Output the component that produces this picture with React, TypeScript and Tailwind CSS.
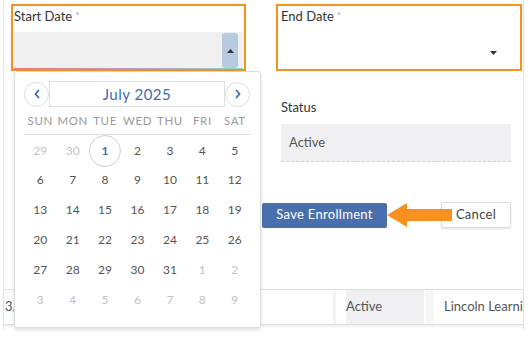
import React from 'react';

const weeks = [
  [29, 30, 1, 2, 3, 4, 5],
  [6, 7, 8, 9, 10, 11, 12],
  [13, 14, 15, 16, 17, 18, 19],
  [20, 21, 22, 23, 24, 25, 26],
  [27, 28, 29, 30, 31, 1, 2],
  [3, 4, 5, 6, 7, 8, 9],
];

function Calendar() {
  return (
    <div className="absolute left-[14px] top-[71px] w-[247px] h-[257px] bg-white border border-[#dcdcdc] rounded-[3px] shadow-[0_2px_4px_rgba(0,0,0,0.12)] px-[9px]">
      {/* month header */}
      <div className="flex items-center mt-[9px] h-[26px]">
        <button className="w-[25px] h-[25px] rounded-full border border-[#dedede] flex items-center justify-center text-[#3a6db5]">
          <svg width="8" height="10" viewBox="0 0 8 10">
            <path d="M5.5 1.5 L2.5 5 L5.5 8.5" fill="none" stroke="currentColor" strokeWidth="1.8" strokeLinecap="round" />
          </svg>
        </button>
        <div className="w-[176px] h-[26px] border border-[#dedede] flex items-center justify-center text-[15px] text-[#3a6db5] tracking-[0.5px]">
          July 2025
        </div>
        <button className="w-[25px] h-[25px] rounded-full border border-[#dedede] flex items-center justify-center text-[#3a6db5]">
          <svg width="8" height="10" viewBox="0 0 8 10">
            <path d="M2.5 1.5 L5.5 5 L2.5 8.5" fill="none" stroke="currentColor" strokeWidth="1.8" strokeLinecap="round" />
          </svg>
        </button>
      </div>
      {/* weekday names */}
      <div className="grid grid-cols-7 w-[227px] mt-[3px] h-[21px] items-center text-[11.5px] text-[#9a9a9a] tracking-[0.6px] text-center">
        {['SUN', 'MON', 'TUE', 'WED', 'THU', 'FRI', 'SAT'].map((d) => (
          <div key={d}>{d}</div>
        ))}
      </div>
      <div className="w-[227px] border-t border-[#dedede] mt-[3px]" />
      <div className="w-[227px]">
        {weeks.map((w, wi) => (
          <div key={wi} className="grid grid-cols-7 h-[30px] items-center text-center text-[12px]">
            {w.map((d, di) => {
              const muted = (wi === 0 && d > 20) || (wi >= 4 && d < 10);
              const today = wi === 0 && d === 1;
              if (today) {
                return (
                  <div key={di} className="flex justify-center">
                    <div className="w-[32px] h-[32px] rounded-full border border-[#cfcfcf] flex items-center justify-center text-[#3a6db5] font-bold">
                      1
                    </div>
                  </div>
                );
              }
              return (
                <div key={di} className={muted ? 'text-[#c2c2c2]' : 'text-[#555]'}>
                  {d}
                </div>
              );
            })}
          </div>
        ))}
      </div>
    </div>
  );
}

export default function App() {
  return (
    <div
      className="relative w-[530px] h-[337px] bg-white overflow-hidden text-[#333]"
      style={{ fontFamily: 'Lato, "Noto Sans", sans-serif' }}
    >
      <div className="ml-[3px] w-[521px] h-[330px] border-l border-r border-l-[#e3e3e3] border-r-[#e2e2ee] flex flex-col">
        {/* date fields */}
        <div className="flex pt-[4px]">
          <div className="ml-[7px] w-[235px] h-[67px] border-2 border-[#f7901e] flex flex-col px-[1px]">
            <div className="text-[13px] mt-[2px] leading-[16px]">
              Start Date <span className="text-[9px] text-[#999] align-top">*</span>
            </div>
            <div className="mt-[8px] h-[37px] bg-[#f0f0f0] flex justify-end items-stretch pr-[5px] pt-[1px] relative">
              <div className="w-[16px] bg-[#b7cbe0] rounded-[3px] flex items-center justify-center mb-[1px]">
                <svg width="7" height="4" viewBox="0 0 7 4">
                  <path d="M0 4 L3.5 0 L7 4 Z" fill="#333" />
                </svg>
              </div>
              <div className="absolute left-0 right-0 bottom-0 h-[1px] bg-gradient-to-r from-[#e57a7a] via-[#b89ad0] to-[#7fd8d8]" />
            </div>
          </div>
          <div className="ml-[30px] w-[246px] h-[67px] border-2 border-[#f7901e] flex flex-col pl-[3px]">
            <div className="text-[13px] mt-[2px] leading-[16px]">
              End Date <span className="text-[9px] text-[#999] align-top">*</span>
            </div>
            <div className="flex-1 flex justify-end items-center pr-[23px] pt-[12px]">
              <svg width="7" height="4" viewBox="0 0 7 4">
                <path d="M0 0 L7 0 L3.5 4 Z" fill="#333" />
              </svg>
            </div>
          </div>
        </div>

        {/* status */}
        <div className="ml-[277px] mt-[28px] w-[230px]">
          <div className="text-[13px] leading-[16px]">Status</div>
          <div className="mt-[9px] h-[38px] bg-[#f0f0f2] border-b border-dashed border-[#cfcfd6] flex items-center pl-[8px] text-[13px] text-[#555]">
            Active
          </div>
        </div>

        {/* actions */}
        <div className="flex items-center ml-[258px] mt-[40px] h-[26px]">
          <button className="w-[125px] h-[25px] bg-[#4a6fae] text-white text-[13px] tracking-[0.3px] rounded-[2px]">
            Save Enrollment
          </button>
          <button className="ml-[54px] w-[70px] h-[26px] bg-white border border-[#dcdcdc] rounded-[2px] shadow-[0_1px_2px_rgba(0,0,0,0.12)] text-[13px] text-[#444] tracking-[0.3px]">
            Cancel
          </button>
        </div>

        {/* table row */}
        <div className="mt-[61px] border-t border-b border-[#dedede] h-[36px] flex text-[13px] text-[#555] shadow-[0_2px_2px_rgba(0,0,0,0.06)]">
          <div className="w-[329px] flex items-center pl-[1px]">3/</div>
          <div className="w-[3px] bg-[#f4f4f4]" />
          <div className="ml-[10px] w-[78px] bg-[#f0f0f2] flex items-center">Active</div>
          <div className="ml-[2px] w-[8px] bg-[#f6f6f6]" />
          <div className="flex-1 flex items-center pl-[10px] whitespace-nowrap overflow-hidden">
            Lincoln Learning
          </div>
        </div>
      </div>

      <Calendar />

      {/* orange arrow pointing to save button */}
      <svg className="absolute left-[386px] top-[202px]" width="68" height="26" viewBox="0 0 68 26">
        <path d="M1 13 L21 1 L21 7 L66 7 L66 19 L21 19 L21 25 Z" fill="#f7901e" />
      </svg>
    </div>
  );
}
